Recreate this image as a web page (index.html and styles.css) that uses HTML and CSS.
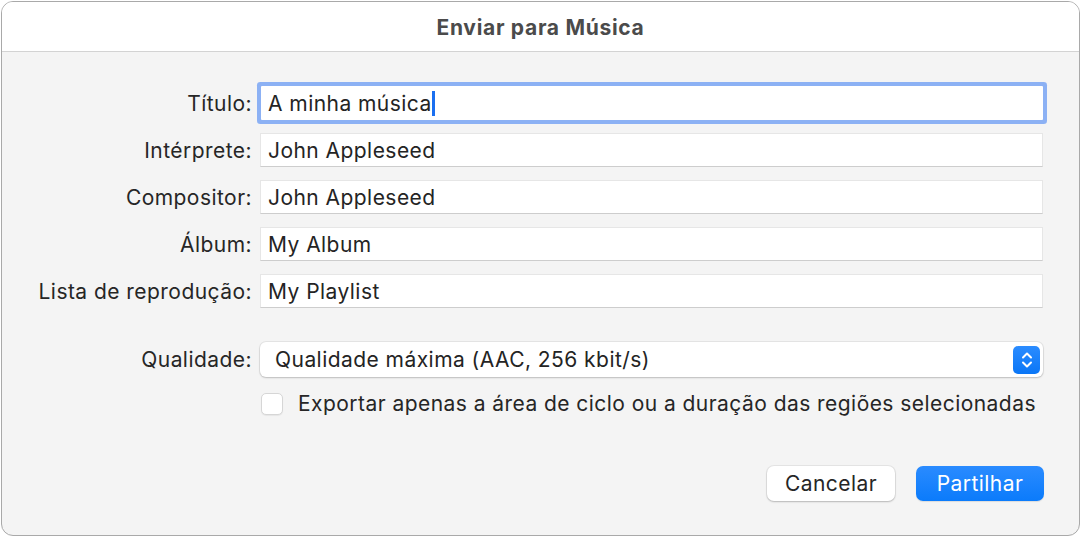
FILE: index.html
```html
<!DOCTYPE html>
<html lang="pt">
<head>
    <meta charset="UTF-8">
    <meta name="viewport" content="width=device-width, initial-scale=1.0">
    <title>Enviar para Música</title>
    <link rel="stylesheet" href="styles.css">
</head>
<body>
    <div class="window">
        <div class="titlebar">Enviar para Música</div>

        <div class="content">
            <div class="form">
                <label class="label">Título:</label>
                <div class="field focused">A minha música<span class="caret"></span></div>

                <label class="label">Intérprete:</label>
                <div class="field">John Appleseed</div>

                <label class="label">Compositor:</label>
                <div class="field">John Appleseed</div>

                <label class="label">Álbum:</label>
                <div class="field">My Album</div>

                <label class="label">Lista de reprodução:</label>
                <div class="field">My Playlist</div>

                <label class="label quality-label">Qualidade:</label>
                <div class="popup">
                    <span>Qualidade máxima (AAC, 256 kbit/s)</span>
                    <span class="stepper">
                        <svg width="14" height="20" viewBox="0 0 14 20">
                            <path d="M3 7.5 L7 3.5 L11 7.5" fill="none" stroke="white" stroke-width="2" stroke-linecap="round" stroke-linejoin="round"/>
                            <path d="M3 12.5 L7 16.5 L11 12.5" fill="none" stroke="white" stroke-width="2" stroke-linecap="round" stroke-linejoin="round"/>
                        </svg>
                    </span>
                </div>

                <div></div>
                <div class="check-row">
                    <span class="checkbox"></span>
                    <span>Exportar apenas a área de ciclo ou a duração das regiões selecionadas</span>
                </div>
            </div>

            <div class="buttons">
                <button class="btn">Cancelar</button>
                <button class="btn primary">Partilhar</button>
            </div>
        </div>
    </div>
</body>
</html>
```

FILE: styles.css
```css
* {
    margin: 0;
    padding: 0;
    box-sizing: border-box;
}

body {
    font-family: Inter, "Liberation Sans", sans-serif;
    background: #ffffff;
    padding: 1px;
    color: #262626;
    font-size: 21px;
    letter-spacing: 0.45px;
}

.window {
    width: 1079px;
    height: 535px;
    border: 1px solid #a9a9a9;
    border-radius: 12px;
    overflow: hidden;
    background: #f4f4f4;
    display: flex;
    flex-direction: column;
}

.titlebar {
    height: 50px;
    background: #ffffff;
    border-bottom: 1px solid #d3d3d3;
    display: flex;
    align-items: center;
    justify-content: center;
    font-size: 21px;
    font-weight: 700;
    letter-spacing: 0.7px;
    color: #4b4b4b;
    padding-top: 1px;
}

.content {
    flex: 1;
    padding: 34px 35px 0 0;
}

.form {
    display: grid;
    grid-template-columns: 250px 783px;
    column-gap: 8px;
    row-gap: 13px;
    align-items: center;
}

.label {
    text-align: right;
    color: #262626;
}

.field {
    height: 34px;
    background: #ffffff;
    border: 1px solid #e6e6e6;
    border-bottom-color: #cdcdcd;
    padding: 0 7px;
    display: flex;
    align-items: center;
    color: #242424;
}

.field.focused {
    margin-left: 1px;
    border: none;
    box-shadow: 0 0 0 4px #8cb1f4;
    border-radius: 1px;
}

.caret {
    display: inline-block;
    width: 3px;
    height: 25px;
    background: #1a6ff0;
}

.quality-label {
    margin-top: 21px;
}

.popup {
    margin-top: 21px;
    height: 35px;
    background: #ffffff;
    border-radius: 6px;
    box-shadow: 0 0 0 1px rgba(0, 0, 0, 0.06), 0 1px 2px rgba(0, 0, 0, 0.18);
    display: flex;
    align-items: center;
    justify-content: space-between;
    padding: 0 3px 0 15px;
    color: #242424;
}

.stepper {
    width: 27px;
    height: 28px;
    border-radius: 5px;
    background: linear-gradient(#2b8cff, #0a76f6);
    display: flex;
    align-items: center;
    justify-content: center;
}

.check-row {
    display: flex;
    align-items: center;
    gap: 15px;
    color: #262626;
    margin-top: 1px;
    padding-left: 1px;
}

.checkbox {
    width: 22px;
    height: 22px;
    border-radius: 5px;
    background: #ffffff;
    border: 1px solid #d6d6d6;
    box-shadow: 0 1px 1px rgba(0, 0, 0, 0.06);
}

.buttons {
    display: flex;
    justify-content: flex-end;
    gap: 21px;
    margin-top: 50px;
}

.btn {
    width: 128px;
    height: 35px;
    border: none;
    border-radius: 7px;
    font-family: inherit;
    font-size: 21px;
    letter-spacing: 0.45px;
    background: #ffffff;
    color: #262626;
    box-shadow: 0 0 0 1px rgba(0, 0, 0, 0.06), 0 1px 2px rgba(0, 0, 0, 0.2);
}

.btn.primary {
    background: linear-gradient(#2a8bff, #0b7bfb);
    color: #ffffff;
    box-shadow: 0 1px 1px rgba(0, 0, 0, 0.1);
}
```
